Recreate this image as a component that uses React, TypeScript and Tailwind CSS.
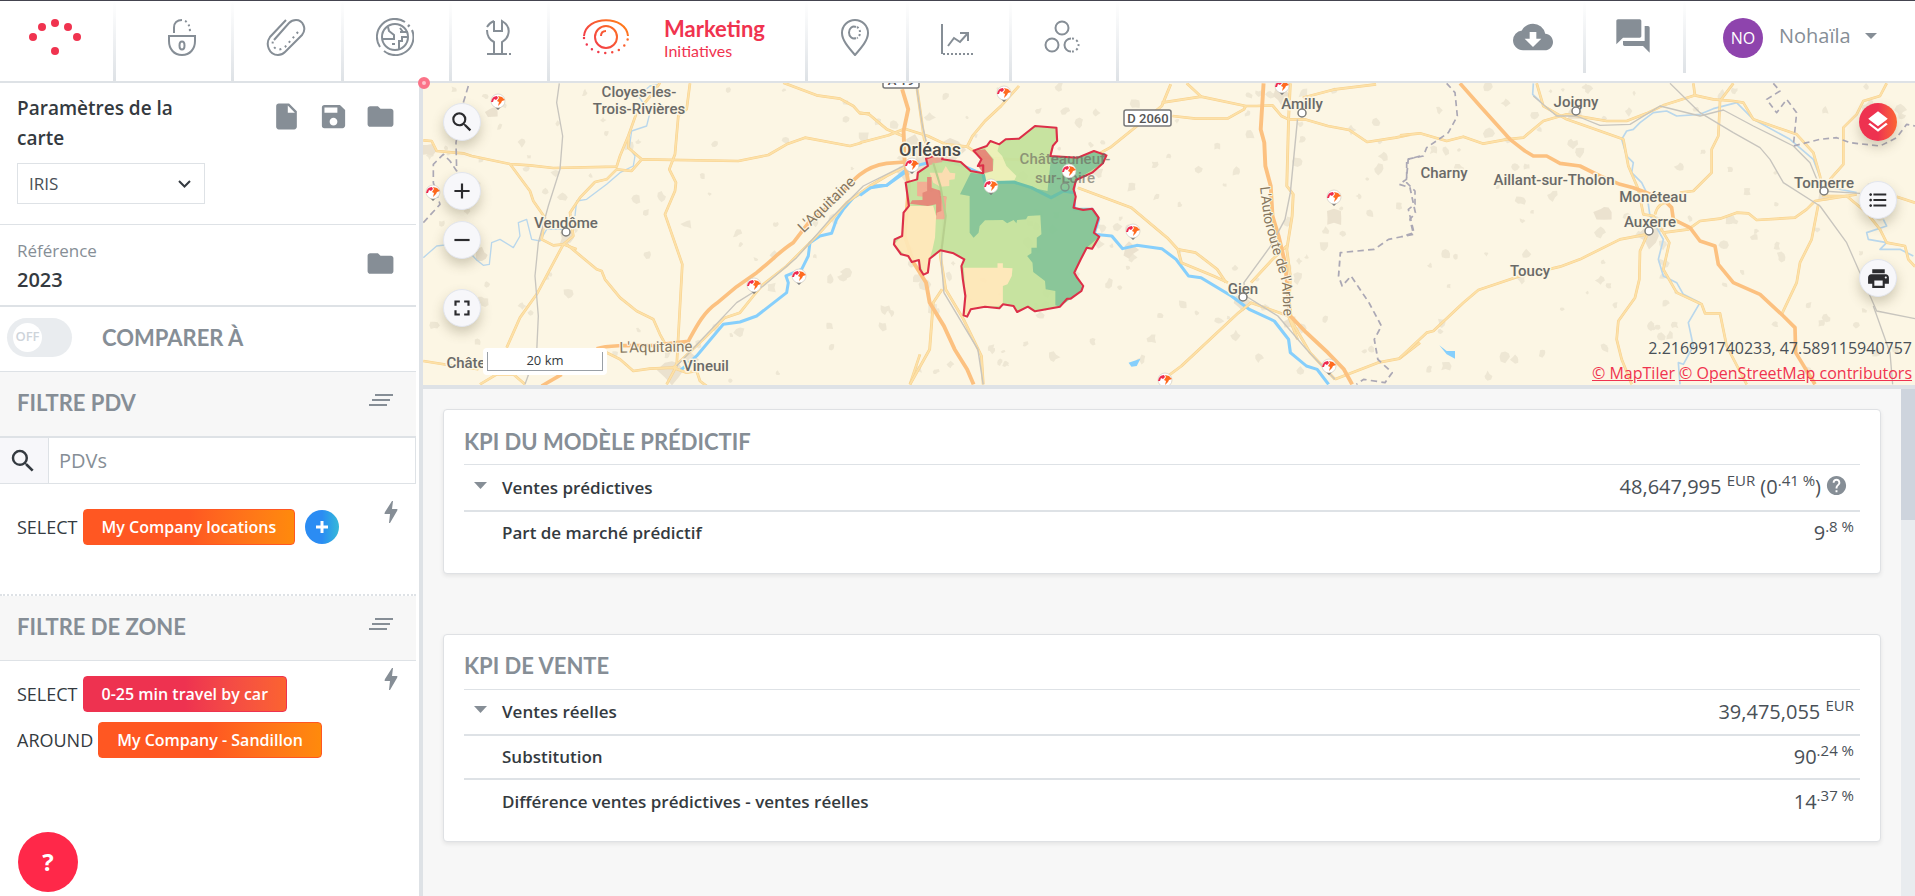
import { ReactNode, useState } from 'react';
import {
  MdAdd,
  MdCloudDownload,
  MdFolder,
  MdForum,
  MdFormatListBulleted,
  MdFullscreen,
  MdHelp,
  MdInsertDriveFile,
  MdLayers,
  MdPrint,
  MdRemove,
  MdSave,
  MdSearch
} from 'react-icons/md';

type MapLabel = { text: string; x: number; y: number; dot?: [number, number] };
type KpiRow = { label: string; caret?: boolean; value: ReactNode };

const YELLOW_WEST = [
  'M10 193 L35 195 50 225 130 232 155 240 270 264 330 268 400 276 590 272 600 240 625 180 650 110 700 50 720 20',
  'M270 264 L330 345 340 375 375 425 365 490 400 508 430 505 470 520',
  'M260 815 L300 725 350 655 430 505 460 480 450 410 480 365 525 318 560 310 590 280 635 285 665 250 955 255 1045 237 1100 205 1155 185 1290 210 1325 200',
  'M625 180 L625 215 665 250',
  'M810 22 L800 100 775 120 765 235 748 280 768 320 765 345 735 415 787 565 775 780 770 870 740 925',
  'M440 505 L530 580 545 585 555 610 600 665 650 705 700 730 720 775 750 830',
  'M1090 20 L1190 58 1260 68 1300 90 1320 112 1350 112',
  'M10 855 L90 868 175 880',
  'M180 925 L230 895 280 895 315 925',
  'M540 820 L600 850 640 885 690 878 760 875 800 890 830 885 840 915 860 930',
  'M760 875 L850 790 915 725 960 710 1000 660 1030 625 1100 570 1200 470 1280 380 1350 330 1400 300 1450 275',
  'M1500 835 L1470 925'
];

const YELLOW_CENTER = [
  'M0 110 L25 115 75 160 120 180',
  'M0 200 L80 178 125 158 190 180 240 205 300 212 315 180 350 135 395 90 445 30',
  'M300 212 L345 245 455 252 640 250 700 215 845 90 870 25',
  'M845 80 L955 62 1080 90 1110 90 1155 88 1180 120 1200 130 1245 130 1310 150 1370 162 1420 198 1500 185 1540 176',
  'M875 120 L940 128 1030 127 1075 100 1080 90',
  'M915 22 L955 62',
  'M1205 22 L1200 130 1195 330 1213 355 1210 420 1195 520 1205 600 1200 720',
  'M1240 65 L1330 40 1445 25',
  'M610 335 L760 395 860 485 890 520 900 560 990 600 1030 620',
  'M890 520 L940 530 1000 580 1025 620',
  'M1095 620 L1155 550 1195 510',
  'M850 910 L900 870 1060 710 1095 680 1200 720 1225 790',
  'M160 40 L180 190 210 260 225 330 237 420 225 540 240 640 290 730 340 840 345 925',
  'M140 925 L195 820 205 680 230 640',
  'M1330 910 L1450 860 1510 848 1568 800',
  'M1200 720 L1260 830 1330 910'
];

const YELLOW_EAST = [
  'M0 178 L60 172 140 195 190 182 250 203 320 190 370 185 430 135 500 115 560 125 620 135 680 135 740 112 790 88 885 58 940 70 1000 75 1030 80 1060 130 1190 175 1240 230 1260 300 1270 360 1340 360 1400 410 1440 460 1460 500 1515 510 1525 550 1545 572',
  'M410 22 L430 90 500 130 600 165 670 190 685 270 715 340 730 415 760 420 790 470 808 500 790 580 830 650 905 685 915 712 960 712 980 810 1040 925',
  'M740 475 L660 490 540 550 480 572 360 600 235 642 190 680 100 765 80 770 0 845',
  'M740 480 L720 525 718 610 705 665 655 735 650 790 665 850 695 925',
  'M790 470 L865 460 900 435 960 428 1010 410 1045 412 1070 432 1185 425 1220 400 1245 375 1370 355',
  'M880 22 L885 58',
  'M1000 22 L960 75 955 180 935 220 935 290 880 345 840 350',
  'M765 415 Q775 375 810 380',
  'M1255 385 L1235 490 1200 560 1190 620 1145 715',
  'M1460 22 L1440 60 1390 75 1370 115 1330 155 1330 265 1290 310',
  'M1490 362 L1545 380'
];

const RAIL_EAST = [
  'M400 60 L470 120 530 120 600 148 690 145 780 90 900 120 970 102 1060 150 1180 210 1230 260 1265 345 1380 352',
  'M810 22 L900 110 1000 170 1080 215 1110 250 1150 320 1260 390 1340 500 1430 705 1545 728',
  'M1420 690 L1470 830 1478 925'
];

const REGION =
  'M210 222 L235 232 230 250 282 258 310 285 345 292 345 268 330 270 340 250 318 224 355 210 365 195 390 205 408 190 445 188 490 150 550 155 552 195 540 210 533 240 610 245 655 225 690 238 680 262 650 290 605 312 598 340 604 362 598 395 625 402 650 398 668 425 655 470 670 482 650 518 635 515 618 550 600 590 608 605 625 630 620 645 590 668 580 668 560 692 490 706 470 692 440 708 430 690 400 685 390 697 350 692 310 700 300 722 290 718 295 660 288 610 284 570 292 550 262 532 225 523 195 548 190 590 178 596 168 580 165 552 145 558 135 540 115 535 95 505 97 490 118 480 122 410 137 390 128 320 160 310 162 290 190 270 185 248 205 240 195 230 Z';

const ZONES = [
  { fill: '#83c495', d: 'M310 290 L345 295 350 320 440 318 480 335 525 345 533 265 533 240 610 245 655 225 690 238 680 262 605 312 598 395 650 398 668 425 655 470 670 482 635 515 600 590 625 640 560 692 547 688 547 645 520 640 518 615 485 588 483 560 468 540 480 532 480 515 495 515 495 485 508 475 505 418 470 420 465 430 440 432 438 442 430 432 412 442 400 432 350 433 335 450 332 470 318 485 307 470 307 360 280 355 Z' },
  { fill: '#fee8b8', d: 'M137 390 L205 390 213 420 210 485 203 520 195 548 190 590 178 595 165 552 145 558 95 505 118 480 122 410 Z' },
  { fill: '#fee8b8', d: 'M291 575 L385 575 385 562 400 562 400 575 427 577 425 600 413 625 400 630 400 688 310 700 300 722 290 718 295 660 Z' },
  { fill: '#ecf0b6', d: 'M365 195 L390 205 385 225 398 240 410 270 438 300 430 318 350 320 345 295 372 285 375 250 350 220 Z' },
  { fill: '#e48474', d: 'M318 224 L350 220 372 250 372 285 345 292 330 270 340 250 Z' },
  { fill: '#fbdcae', d: 'M195 290 L230 290 240 270 252 290 267 292 265 310 250 312 250 330 225 332 205 320 Z' },
  { fill: '#f3aa90', d: 'M160 317 L188 317 188 303 200 303 202 335 175 362 160 360 Z' },
  { fill: '#e48474', d: 'M188 303 L200 303 200 335 228 345 226 360 242 362 238 400 225 425 213 418 213 385 190 390 140 383 146 373 175 372 175 350 188 345 Z' },
  { fill: '#f3aa90', d: 'M228 362 L242 362 238 430 213 430 215 410 228 405 Z' },
  { fill: '#eda28c', d: 'M205 225 L235 232 230 258 210 262 190 270 187 248 Z' }
];

const LABELS: MapLabel[] = [
  { text: 'Cloyes-les-', x: 639, y: 97 },
  { text: 'Trois-Rivières', x: 639, y: 114 },
  { text: 'Vendôme', x: 566, y: 228, dot: [566, 232] },
  { text: 'Vineuil', x: 706, y: 371 },
  { text: 'Châte', x: 466, y: 368 },
  { text: 'Amilly', x: 1302, y: 109, dot: [1302, 113] },
  { text: 'Gien', x: 1243, y: 294, dot: [1243, 297] },
  { text: 'Charny', x: 1444, y: 178 },
  { text: 'Aillant-sur-Tholon', x: 1554, y: 185 },
  { text: 'Monéteau', x: 1653, y: 202 },
  { text: 'Auxerre', x: 1650, y: 227, dot: [1649, 231] },
  { text: 'Tonnerre', x: 1824, y: 188, dot: [1824, 191] },
  { text: 'Joigny', x: 1576, y: 107, dot: [1576, 111] },
  { text: 'Toucy', x: 1530, y: 276 }
];

const PINS = [
  [498, 101], [433, 192], [912, 165], [799, 276], [754, 285], [1004, 93], [991, 186],
  [1069, 171], [1133, 231], [1282, 86], [1334, 197], [1329, 366], [1165, 380]
];

// x, y, radius of built-up areas around the bigger towns
const TOWNS = [
  [930, 162, 17], [950, 150, 15], [915, 148, 12], [905, 172, 9], [566, 238, 8], [482, 255, 7], [672, 370, 14], [690, 360, 9],
  [1282, 96, 12], [1243, 303, 9], [1290, 322, 8], [1649, 236, 12], [1660, 222, 9], [1575, 112, 9], [1824, 194, 8],
  [427, 150, 9], [493, 112, 7], [1129, 250, 9], [1334, 218, 9], [1604, 212, 9]
];

const noise = (n: number) => {
  const v = Math.sin(n * 127.1) * 43758.5453;
  return v - Math.floor(v);
};

const blob = (x: number, y: number, r: number, seed: number) =>
  'M' +
  Array.from({ length: 8 }, (_, i) => {
    const d = r * (0.45 + noise(seed + i * 7) * 0.75);
    const a = (i / 8) * Math.PI * 2;
    return `${(x + Math.cos(a) * d).toFixed(1)} ${(y + Math.sin(a) * d).toFixed(1)}`;
  }).join(' L') +
  ' Z';

const WOODS = Array.from({ length: 330 }, (_, i) =>
  blob(425 + noise(i + 1) * 1488, 86 + noise(i + 500) * 296, 2 + noise(i + 900) * 4, i)
);

const Roads = ({ paths }: { paths: string[] }) => (
  <>
    {paths.map((d) => (
      <path key={d} d={d} stroke="#f7d08c" strokeWidth="8" />
    ))}
    {paths.map((d) => (
      <path key={d} d={d} stroke="#fde1a8" strokeWidth="5" />
    ))}
  </>
);

const Pin = ({ x, y }: { x: number; y: number }) => (
  <g transform={`translate(${x} ${y})`}>
    <path d="M-5 4 L5 4 0 9 Z" fill="#6f7072" />
    <circle r="7" fill="#fff" stroke="#c9c4ba" strokeWidth=".6" />
    <path d="M-7 1 Q-6 -5 -1 -5 L0 -3 -2 -1 -4 -2 -5 1 Z" fill="#ee2b4f" />
    <path d="M-1 0 L1 -3 0 -5 4 -4 7 -1 4 0 3 2 0 5 1 1 Z" fill="#ff6a1f" />
  </g>
);

const MapCanvas = () => (
  <svg
    className="block h-full w-full"
    viewBox="423 83 1492 302"
    preserveAspectRatio="xMidYMid slice"
    role="img"
    aria-label="Carte"
  >
    <rect x="0" y="0" width="2400" height="1200" fill="#fcf6e4" />
    {WOODS.map((d, i) => (
      <path key={i} d={d} fill="#eee7d4" />
    ))}
    {TOWNS.map(([x, y, r], i) => (
      <path key={i} d={blob(x, y, r, i + 40)} fill="#ebe2cf" />
    ))}

    <g fill="none" strokeLinejoin="round">
      <g transform="translate(420 76) scale(.3333)">
        <g stroke="#b9d7ec" strokeWidth="4">
          <path d="M10 545 L50 510 90 505 140 520 170 552 190 568 208 565 215 500 240 490 280 515 300 480 295 440 320 430 335 490 360 495 380 460 430 460" />
          <path d="M718 25 L690 30 655 60 690 110 680 150 635 165 628 215 645 240 640 270 600 290 560 325 500 370 470 375 465 420" />
        </g>
        <path
          d="M780 885 L830 840 910 745 960 738 1010 720 1100 650 1105 620 1098 600 1145 580 1165 540 1170 500 1200 480 1235 472 1250 430 1270 400 1300 365 1360 330 1400 328 1460 280"
          stroke="#86cffc"
          strokeWidth="9"
        />
        <Roads paths={YELLOW_WEST} />
        <g stroke="#fcc180" strokeWidth="11">
          <path d="M365 930 L425 895" />
          <path d="M530 818 C560 808 620 808 700 808 L805 796 C830 750 850 710 890 682 L950 632 1010 590 C1060 550 1080 525 1120 500 L1170 435 1240 380 C1300 310 1330 272 1400 262 L1455 258" />
        </g>
        <g stroke="#c8c5be" strokeWidth="4">
          <path d="M418 22 L410 80 428 180 420 280 385 390 355 500 345 600 355 720 350 830 315 925" />
          <path d="M770 870 L950 680 1030 630 1130 545 1230 430 1330 330 1460 265" />
        </g>
        <path
          d="M145 30 L130 80 108 200 110 285 90 255 70 235 40 265 40 320 60 385 10 440"
          stroke="#aba8b5"
          strokeWidth="5"
          strokeDasharray="20 12"
        />
      </g>

      <g transform="translate(860 76) scale(.35714 .33333)">
        <path
          d="M0 358 L30 335 75 328 145 275 Q190 255 240 255 L290 270 345 295 350 320 430 318 480 335 535 365 570 345 600 350 600 400 650 400 668 430 655 475 705 480 735 518 775 508 845 518 885 550 920 600 955 605 1040 660 1090 700 1160 735 1200 790 1205 830 1250 870 1280 880 1312 925"
          stroke="#86cffc"
          strokeWidth="9"
        />
        <Roads paths={YELLOW_CENTER} />
        <g stroke="#fcc180" strokeWidth="11">
          <path d="M118 40 L135 100 122 165 125 255 137 330 125 480 150 560 185 620 195 680 235 750 265 820 300 880 318 925" />
          <path d="M1130 22 L1122 160 1132 200 1135 270 1150 330 1155 420 1172 480 1190 560 1205 720 1250 770 1310 830 1355 880 1378 925" />
        </g>
        <g stroke="#c8c5be" strokeWidth="4">
          <path d="M158 30 L175 150 200 260 235 400 228 560 235 650 330 820 345 925" />
          <path d="M1225 130 L1205 350 1190 430 1150 510 1075 620 1080 660 1170 720 1250 820 1330 910" />
        </g>
        <path
          d="M1568 240 L1535 250 1530 310 1510 325 1540 335 1555 410 1540 430 1550 475 1480 490 1440 520 1345 530 1340 600 1350 630 1375 600 1425 680 1460 750 1440 790 1450 850 1490 890 1470 920 1410 910 1390 925"
          stroke="#aba8b5"
          strokeWidth="5"
          strokeDasharray="18 12"
        />
        <path d="M752 860 L785 848 775 870 760 872 Z" fill="#86cffc" />
        <g opacity=".94">
          <path d={REGION} fill="#c4e29c" />
          {ZONES.map((zone) => (
            <path key={zone.d} d={zone.d} fill={zone.fill} />
          ))}
        </g>
        <path
          d="M345 295 L350 320 430 318 480 335 535 365 570 345 600 350"
          stroke="#6cc0a8"
          strokeWidth="9"
        />
        <path d="M205 260 L225 330 240 420 228 525" stroke="#b7cf8e" strokeWidth="6" />
        <path d={REGION} stroke="#dc2f48" strokeWidth="6" />
      </g>

      <g transform="translate(1400 76) scale(.33333)">
        <g stroke="#b9d7ec" strokeWidth="5">
          <path d="M400 22 L398 55 430 85" />
          <path d="M665 190 L680 165 700 160 720 140 760 110 800 105 830 120 900 115 940 98 1010 80 1060 130 1170 190 1240 250 1270 330 1370 350" />
          <path d="M665 190 L680 240 700 260 695 290 725 320 740 350 750 420 790 490 775 550 790 600 830 620 850 655 900 680 865 740 880 810 850 865 835 860 840 925" />
          <path d="M1450 430 L1460 450 1400 470 1405 490 1460 500 1440 520 1500 520 1540 540" />
        </g>
        <Roads paths={YELLOW_EAST} />
        <path
          d="M180 22 L240 90 330 190 375 225 400 240 440 240 480 262 540 270 600 300 660 325 700 335 740 350 790 370 815 395 820 430 870 455 900 495 945 510 955 565 1000 620 1080 655 1150 720 1185 755 1187 830 1245 925"
          stroke="#fcc180"
          strokeWidth="11"
        />
        <g stroke="#c8c5be" strokeWidth="4">
          {RAIL_EAST.map((d) => (
            <path key={d} d={d} />
          ))}
        </g>
        <g stroke="#aba8b5" strokeWidth="5" strokeDasharray="18 12">
          <path d="M140 22 L165 50 172 120 145 170 80 215 70 240 20 250 20 320 45 345 45 385 25 400 42 470 5 482" />
          <path d="M1120 22 L1140 45 1100 70 1130 110 1160 70 1190 110 1180 210 1260 190 1310 185 1350 200 1440 210 1490 185 1520 145 1545 150" />
        </g>
        <path d="M118 808 L140 825 165 825 165 848 140 835 Z" fill="#86cffc" />
      </g>
    </g>

    <g
      fontFamily="Roboto, sans-serif"
      fontWeight="500"
      fontSize="15"
      fill="#6a6a68"
      textAnchor="middle"
      stroke="#fcf6e4"
      strokeWidth="3"
      strokeLinejoin="round"
      paintOrder="stroke"
    >
      {LABELS.map(({ text, x, y, dot }) => (
        <g key={text}>
          <text x={x} y={y}>
            {text}
          </text>
          {dot && (
            <circle cx={dot[0]} cy={dot[1]} r="4" fill="#fff" stroke="#7b7b78" strokeWidth="1.5" paintOrder="normal" />
          )}
        </g>
      ))}
      <text x="930" y="156" fontSize="18" fill="#4a4a4a">
        Orléans
      </text>
      <g fill="#6d6a60" stroke="none" opacity=".65">
        <text x="1065" y="164">
          Châteauneuf-
        </text>
        <text x="1065" y="183">
          sur-Loire
        </text>
        <circle cx="1065" cy="187" r="4" fill="none" stroke="#7b7b78" strokeWidth="1.5" />
      </g>
      <g fontWeight="400" fill="#86765f" strokeWidth="2">
        <text transform="translate(830 208) rotate(-44)">L'Aquitaine</text>
        <text transform="translate(656 352) rotate(-1)">L'Aquitaine</text>
        <path id="a77" d="M1260 187 L1264 220 1273 252 1282 283 1284 325" fill="none" stroke="none" />
        <text textAnchor="start" fontSize="14">
          <textPath href="#a77">L'Autoroute de l'Arbre</textPath>
        </text>
      </g>
      <g fontSize="13" fill="#555">
        <rect x="1124" y="110" width="47" height="16" rx="2" fill="#fff" stroke="#777" strokeWidth="1.5" paintOrder="normal" />
        <text x="1148" y="123" stroke="none">
          D 2060
        </text>
        <rect x="883" y="72" width="36" height="16" rx="2" fill="#fff" stroke="#777" strokeWidth="1.5" paintOrder="normal" />
        <text x="901" y="85" stroke="none">
          A 19
        </text>
      </g>
    </g>

    {PINS.map(([x, y]) => (
      <Pin key={`${x}-${y}`} x={x} y={y} />
    ))}
  </svg>
);

const IconLock = () => (
  <svg width="30" height="38" viewBox="0 0 30 38" fill="none" stroke="#868e96" strokeWidth="2">
    <path d="M7 15V9.5C7 5 10 2 15 2" />
    <path d="M18 3 Q23 5 23 15" strokeDasharray="2 3" />
    <path d="M2 18h26v5c0 8-5 14-13 14S2 31 2 23z" />
    <ellipse cx="15" cy="27.5" rx="2.5" ry="4" />
  </svg>
);

const IconClip = () => (
  <svg width="40" height="38" viewBox="0 0 40 38" fill="none" stroke="#868e96" strokeWidth="2">
    <path d="M20 2 L4 19 C-1 26 3 37 12 37 C15 37 17 36 19 34 L36 17 C41 11 37 2 30 2 C27 2 25 3 23 5 L8 22" />
    <path d="M32 14 L19 29 Q12 34 8 29 Q6 27 7 22" strokeDasharray="2 4" />
  </svg>
);

const IconGlobe = () => (
  <svg width="38" height="38" viewBox="0 0 38 38" fill="none" stroke="#868e96" strokeWidth="2">
    <circle cx="19" cy="19" r="13" />
    <path d="M29 4 A18 18 0 0 0 4 29" />
    <path d="M36 12 A18 18 0 0 1 8 33" />
    <path d="M32 7 l1.5 1.5" strokeWidth="2.5" />
    <path d="M12 9l1 4 5 4v4H7M32 14h-8M32 19h-6v4h-3v8M24 10l3 4M16 26h3" />
  </svg>
);

const IconWrench = () => (
  <svg width="28" height="37" viewBox="0 0 28 37" fill="none" stroke="#868e96" strokeWidth="2">
    <path d="M10 2v10h8V2c5 3 8 8 6 14-1 4-3 5-6 7v12h-8V23c-4-2-7-6-7-12" />
    <path d="M10 2C7 3 5 5 3 8" />
    <path d="M3 35h20M25 35h2" />
  </svg>
);

const IconEye = () => (
  <svg width="48" height="38" viewBox="0 0 48 38" fill="none" stroke="url(#eye)" strokeWidth="2">
    <defs>
      <linearGradient id="eye" x1="0" y1="38" x2="34" y2="0" gradientUnits="userSpaceOnUse">
        <stop offset=".2" stopColor="#f0334f" />
        <stop offset="1" stopColor="#ff7a1c" />
      </linearGradient>
    </defs>
    <path d="M2 18C4 -3 44 -3 46 18" />
    <path d="M2 20C6 40 42 40 46 20" strokeWidth="2.5" strokeLinecap="round" strokeDasharray="0 7" />
    <circle cx="24" cy="19" r="11" />
    <path d="M19 18c0-3 2-5 5-5" />
  </svg>
);

const IconPin = () => (
  <svg width="30" height="38" viewBox="0 0 30 38" fill="none" stroke="#868e96" strokeWidth="2">
    <path d="M15 37C8 29 2 22 2 15a13 13 0 0 1 26 0c0 7-6 14-13 22z" />
    <path d="M16 20a5 6 0 1 1 0-11" />
    <path d="M17 9a5 6 0 0 1 0 11" strokeDasharray="2 2" />
  </svg>
);

const IconChart = () => (
  <svg width="34" height="33" viewBox="0 0 34 33" fill="none" stroke="#868e96" strokeWidth="2">
    <path d="M2 1v30" />
    <path d="M3 31h30" strokeDasharray="2 2" />
    <path d="M8 23l6-8 6 4 8-9M20 10h8v8" />
  </svg>
);

const IconCircles = () => (
  <svg width="36" height="36" viewBox="0 0 36 36" fill="none" stroke="#868e96" strokeWidth="2">
    <circle cx="18" cy="9" r="6.5" />
    <circle cx="8" cy="26" r="6.5" />
    <path d="M27 32.5a6.5 6.5 0 1 1 0-13" />
    <path d="M28 19.5a6.5 6.5 0 0 1 0 13" strokeDasharray="2 2.5" />
  </svg>
);

const Divider = ({ short }: { short?: boolean }) => (
  <span
    className={`w-[3px] shrink-0 bg-linear-to-b from-white to-[#dee2e6] ${short ? 'mb-2' : ''}`}
  />
);

const NavItem = ({ label, className, children }: { label: string; className: string; children: ReactNode }) => (
  <>
    <a
      href="#"
      aria-label={label}
      className={`flex shrink-0 items-center justify-center pb-2 ${className}`}
    >
      {children}
    </a>
    <Divider />
  </>
);

const Bars = () => (
  <svg width="24" height="14" viewBox="0 0 24 14" stroke="#868e96" strokeWidth="2">
    <path d="M6 2h18M3 7h18M0 12h18" />
  </svg>
);

const Bolt = () => (
  <svg className="absolute top-4 right-[18px]" width="14" height="24" viewBox="0 0 14 24" fill="#868e96">
    <path d="M8 1 L9 1 8 9 13 9 Q14 9 13 11 L6 23 5 23 6 14 1 14 Q0 14 1 12 Z" />
  </svg>
);

const SectionHeader = ({ title }: { title: string }) => (
  <div className="flex h-16 items-center justify-between bg-[#f7f7f7] pr-[23px] pb-1 pl-[17px]">
    <h2 className="font-['Lato',sans-serif] text-[22px] font-bold text-[#868e96]">{title}</h2>
    <button type="button" aria-label={title} className="pb-1">
      <Bars />
    </button>
  </div>
);

const CHIP =
  'h-9 rounded border px-[18px] text-[16px] leading-none font-semibold text-white bg-linear-to-r from-50%';

const ORANGE = 'border-[#ff5722] from-[#ff5722] to-[#ff8a0b]';
const RED = 'border-[#ee3250] from-[#ee3250] to-[#fb6330]';

const MapButton = ({ label, className = '', children }: { label: string; className?: string; children: ReactNode }) => (
  <button
    type="button"
    aria-label={label}
    className={`flex size-[38px] items-center justify-center rounded-full shadow-[0_6px_12px_rgba(80,70,40,0.25)] ${className || 'border border-[#e3e6ee] bg-[#f7f7fa] text-[#2b2b2e]'
      }`}
  >
    {children}
  </button>
);

const Sup = ({ children }: { children: ReactNode }) => (
  <sup className="top-0 align-[8px] text-[15px] leading-none">{children}</sup>
);

const Kpi = ({ title, rows }: { title: string; rows: KpiRow[] }) => (
  <section className="rounded border border-[#dfe1e4] bg-white px-5 pt-3 pb-[18px] shadow-[0_2px_4px_rgba(0,0,0,0.08)]">
    <h2 className="flex h-[42px] items-center pb-1 font-['Lato',sans-serif] text-[22px] font-bold text-[#868e96]">
      {title}
    </h2>
    <table className="w-full border-t border-[#dee2e6]">
      <tbody>
        {rows.map(({ label, caret, value }) => (
          <tr key={label} className="h-11 border-b-2 border-[#dee2e6] first:h-[46px] last:border-b-0">
            <th scope="row" className="py-0 text-left text-[17px] font-semibold text-[#343a40]">
              <span className="flex items-center">
                <span className="flex w-[38px] justify-start pb-1 pl-[10px]">
                  {caret && (
                    <svg width="13" height="7" viewBox="0 0 13 7" fill="#868e96">
                      <path d="M0 0h13L6.5 7z" />
                    </svg>
                  )}
                </span>
                {label}
              </span>
            </th>
            <td className="py-0 pr-[6px] text-right text-[20px] text-[#495057]">{value}</td>
          </tr>
        ))}
      </tbody>
    </table>
  </section>
);

const predictiveRows: KpiRow[] = [
  {
    label: 'Ventes prédictives',
    caret: true,
    value: (
      <>
        48,647,995 <Sup>EUR</Sup> (0<Sup>.41 %</Sup>)
        <MdHelp className="mr-[6px] ml-1 inline align-[-3px] text-[23px] text-[#868e96]" />
      </>
    )
  },
  { label: 'Part de marché prédictif', value: <>9<Sup>.8 %</Sup></> }
];

const salesRows: KpiRow[] = [
  { label: 'Ventes réelles', caret: true, value: <>39,475,055 <Sup>EUR</Sup></> },
  { label: 'Substitution', value: <>90<Sup>.24 %</Sup></> },
  { label: 'Différence ventes prédictives - ventes réelles', value: <>14<Sup>.37 %</Sup></> }
];

const Header = () => (
  <header className="flex h-[83px] shrink-0 border-t border-b-2 border-t-[#44444f] border-b-[#dee2e6] bg-white">
    <NavItem label="Accueil" className="w-[113px] pr-1">
      <svg width="52" height="38" viewBox="0 0 52 38" fill="#f0334f">
        <circle cx="4" cy="19" r="4" />
        <circle cx="13" cy="9" r="4" />
        <circle cx="26" cy="5" r="4" />
        <circle cx="39" cy="9" r="4" />
        <circle cx="48" cy="19" r="4" />
        <circle cx="26" cy="33" r="4" />
      </svg>
    </NavItem>
    <NavItem label="Sécurité" className="w-[115px] pl-4">
      <IconLock />
    </NavItem>
    <NavItem label="Fichiers" className="w-[107px] pr-1">
      <IconClip />
    </NavItem>
    <NavItem label="Monde" className="w-[105px] pr-1">
      <IconGlobe />
    </NavItem>
    <NavItem label="Outils" className="w-[95px] pr-1">
      <IconWrench />
    </NavItem>
    <NavItem label="Marketing Initiatives" className="w-[255px] gap-[34px] pr-2">
      <IconEye />
      <span className="flex flex-col pt-1 font-['Lato',sans-serif] text-[#f0334f]">
        <span className="text-[22px] leading-6 font-bold">Marketing</span>
        <span className="text-[16px] leading-5">Initiatives</span>
      </span>
    </NavItem>
    <NavItem label="Localisation" className="w-[98px] pr-1">
      <IconPin />
    </NavItem>
    <NavItem label="Statistiques" className="w-[100px] pt-1 pr-1">
      <IconChart />
    </NavItem>
    <NavItem label="Groupes" className="w-[104px] pr-1">
      <IconCircles />
    </NavItem>
    <div className="ml-auto flex text-[#868e96]">
      <button type="button" aria-label="Télécharger" className="flex w-[100px] items-center justify-center pb-2">
        <MdCloudDownload size={40} />
      </button>
      <Divider short />
      <button type="button" aria-label="Messages" className="flex w-[97px] items-center justify-center pr-1 pb-[10px]">
        <MdForum size={40} />
      </button>
      <Divider short />
      <button type="button" className="flex w-[229px] items-center pb-[10px] pl-[37px]">
        <span className="mt-1 flex size-10 items-center justify-center rounded-full bg-[#8e44ad] text-[16px] text-white">
          NO
        </span>
        <span className="ml-4 text-[20px]">Nohaïla</span>
        <svg className="ml-[14px]" width="12" height="6" viewBox="0 0 12 6" fill="#868e96">
          <path d="M0 0h12L6 6z" />
        </svg>
      </button>
    </div>
  </header>
);

const Sidebar = () => {
  const [compare, setCompare] = useState(false);
  const [search, setSearch] = useState('');

  return (
    <aside className="relative flex w-[416px] shrink-0 flex-col bg-white text-[#343a40]">
      <div className="h-[142px] border-b border-[#dee2e6] pt-[10px] pr-5 pl-[17px]">
        <div className="flex items-start justify-between">
          <h1 className="w-44 text-[19px] leading-[30px] font-semibold">Paramètres de la carte</h1>
          <div className="flex gap-4 pt-2 text-[#868e96]">
            <button type="button" aria-label="Nouveau"><MdInsertDriveFile size={31} /></button>
            <button type="button" aria-label="Enregistrer"><MdSave size={31} /></button>
            <button type="button" aria-label="Ouvrir"><MdFolder size={31} /></button>
          </div>
        </div>
        <div className="relative mt-[10px] w-[188px]">
          <select
            aria-label="Découpage"
            className="h-[41px] w-full appearance-none border border-[#dee2e6] bg-white pl-[11px] text-[17px] text-[#495057]"
          >
            <option>IRIS</option>
          </select>
          <svg
            className="pointer-events-none absolute top-[17px] right-[14px]"
            width="13"
            height="8"
            viewBox="0 0 13 8"
            fill="none"
            stroke="#343a40"
            strokeWidth="2"
          >
            <path d="M1 1l5.5 5.500L12 1" />
          </svg>
        </div>
      </div>
      <div className="flex h-[82px] items-center justify-between border-b-2 border-[#dee2e6] pr-5 pl-[17px]">
        <div>
          <p className="text-[17px] leading-[29px] text-[#868e96]">Référence</p>
          <p className="text-[20px] leading-[29px] font-semibold">2023</p>
        </div>
        <button type="button" aria-label="Ouvrir la référence" className="pb-1 text-[#868e96]">
          <MdFolder size={31} />
        </button>
      </div>
      <div className="flex h-[65px] items-center border-b border-[#dee2e6] pb-1 pl-[7px]">
        <label className="flex items-center gap-[30px]">
          <input
            type="checkbox"
            className="sr-only"
            checked={compare}
            onChange={(e) => setCompare(e.target.checked)}
          />
          <span className={`flex h-[39px] w-[65px] items-center rounded-full bg-[#e9ecef] px-[6px] ${compare ? 'justify-end' : ''}`}>
            <span className="flex size-[29px] items-center justify-center rounded-full bg-white text-[13px] font-semibold text-[#ced4da]">
              {compare ? 'ON' : 'OFF'}
            </span>
          </span>
          <span className="font-['Lato',sans-serif] text-[22px] font-bold text-[#868e96]">COMPARER À</span>
        </label>
      </div>
      <SectionHeader title="FILTRE PDV" />
      <div className="flex h-12 border-t-2 border-r border-b border-[#dee2e6]">
        <span className="flex w-[49px] shrink-0 items-center border-r border-[#dee2e6] bg-[#f7f7fa] pl-2">
          <MdSearch size={30} />
        </span>
        <input
          type="text"
          aria-label="PDVs"
          placeholder="PDVs"
          value={search}
          onChange={(e) => setSearch(e.target.value)}
          className="w-full min-w-0 px-[10px] text-[20px] outline-none placeholder:text-[#868e96]"
        />
      </div>
      <div className="relative h-[110px] pt-[25px] pl-[17px]">
        <Bolt />
        <div className="flex items-center">
          <span className="mr-[5px] text-[18px] font-medium">SELECT</span>
          <button type="button" className={`${CHIP} ${ORANGE}`}>My Company locations</button>
          <button
            type="button"
            aria-label="Ajouter"
            className="ml-[10px] flex size-[34px] items-center justify-center rounded-full bg-linear-to-r from-[#2b8cf3] from-50% to-[#38b8d8] text-white"
          >
            <svg width="14" height="14" viewBox="0 0 14 14" stroke="currentColor" strokeWidth="3">
              <path d="M7 1v12M1 7h12" />
            </svg>
          </button>
        </div>
      </div>
      <div className="border-t-2 border-dotted border-[#dee2e6]">
        <SectionHeader title="FILTRE DE ZONE" />
      </div>
      <div className="relative border-t border-[#dee2e6] pt-[15px] pl-[17px]">
        <div className="absolute -top-[10px] right-0">
          <Bolt />
        </div>
        <div className="flex items-center">
          <span className="mr-[5px] text-[18px] font-medium">SELECT</span>
          <button type="button" className={`${CHIP} ${RED}`}>0-25 min travel by car</button>
        </div>
        <div className="mt-[10px] flex items-center">
          <span className="mr-[5px] text-[18px] font-medium">AROUND</span>
          <button type="button" className={`${CHIP} ${ORANGE}`}>My Company - Sandillon</button>
        </div>
      </div>
      <button
        type="button"
        className="absolute bottom-1 left-[18px] size-[60px] rounded-full bg-[#ff2849] text-[24px] font-bold text-white"
      >
        ?
      </button>
    </aside>
  );
};

export default function App() {
  return (
    <div className="flex h-screen flex-col overflow-hidden bg-white font-['Open_Sans',sans-serif]">
      <Header />
      <div className="flex min-h-0 flex-1">
        <Sidebar />
        <main className="relative ml-[3px] flex min-w-0 flex-1 flex-col border-l-4 border-[#dee2e6] bg-[#f7f7f7]">
          <span className="absolute -top-[6px] -left-[5px] z-10 size-3 rounded-full border-4 border-[#fb7388] bg-[#fdc3cb]" />
          <section className="relative min-h-0 flex-[302] overflow-hidden">
            <div className="absolute inset-0">
              <MapCanvas />
            </div>
            <div className="absolute top-5 left-5 flex flex-col">
              <MapButton label="Rechercher"><MdSearch size={26} /></MapButton>
              <div className="mt-[31px] mb-[30px] flex flex-col gap-[11px]">
                <MapButton label="Zoom avant"><MdAdd size={26} /></MapButton>
                <MapButton label="Zoom arrière"><MdRemove size={26} /></MapButton>
              </div>
              <MapButton label="Plein écran"><MdFullscreen size={26} /></MapButton>
            </div>
            <div className="absolute top-5 right-[18px] flex flex-col gap-10">
              <MapButton
                label="Couches"
                className="bg-linear-to-r from-[#ee3250] from-50% to-[#fb6330] text-white"
              >
                <MdLayers size={26} />
              </MapButton>
              <MapButton label="Légende"><MdFormatListBulleted size={22} /></MapButton>
              <MapButton label="Imprimer"><MdPrint size={25} /></MapButton>
            </div>
            <div className="absolute bottom-[10px] left-[60px] rounded-sm bg-white p-1">
              <div className="h-[19px] w-[116px] border-x border-b border-[#9aa0a6] text-center text-[13px] leading-4 text-[#343a40]">
                20 km
              </div>
            </div>
            <div className="absolute right-[3px] -bottom-px text-right text-[#495057]">
              <p className="text-[16px] leading-[25px]">2.216991740233, 47.589115940757</p>
              <p className="text-[16px] leading-[25px] text-[#f0334f]">
                <a href="#" className="underline">© MapTiler</a>{' '}
                <a href="#" className="underline">© OpenStreetMap contributors</a>
              </p>
            </div>
          </section>
          <section className="flex min-h-0 flex-[507] border-t-4 border-[#dee2e6]">
            <div className="flex min-w-0 flex-1 flex-col gap-[60px] overflow-hidden p-5">
              <Kpi title="KPI DU MODÈLE PRÉDICTIF" rows={predictiveRows} />
              <Kpi title="KPI DE VENTE" rows={salesRows} />
            </div>
            <div className="w-[14px] shrink-0 bg-[#e9ecef]">
              <div className="h-[131px] bg-[#ced4dd]" />
            </div>
          </section>
        </main>
      </div>
    </div>
  );
}
